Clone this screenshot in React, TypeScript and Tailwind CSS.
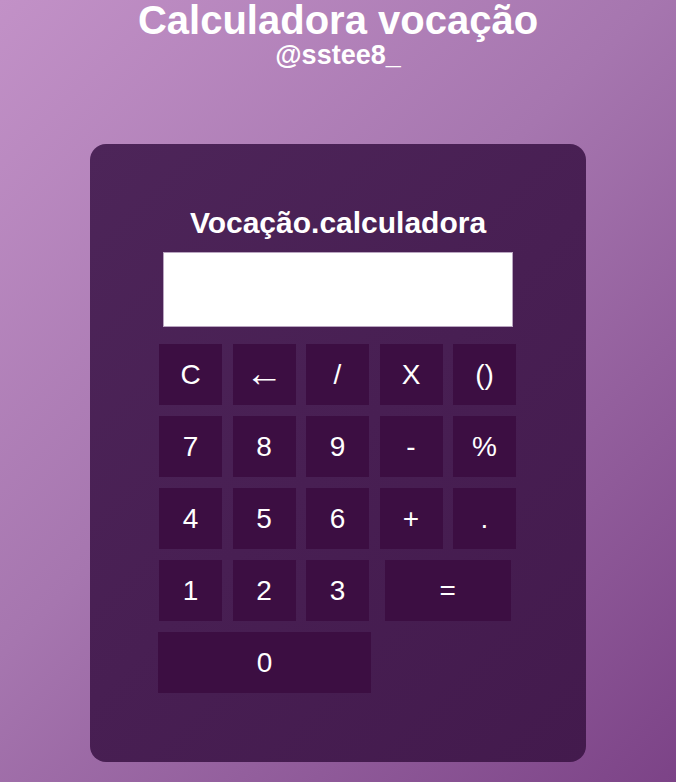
import React from "react";

const font = { fontFamily: '"Liberation Sans", Arial, sans-serif' };

function Key({ label, className = "" }: { label: string; className?: string }) {
  return (
    <button
      type="button"
      className={`h-[61px] bg-[#3c0e42] text-white text-[28px] leading-none flex items-center justify-center ${className}`}
    >
      {label}
    </button>
  );
}

export default function App() {
  const rows1 = ["C", "←", "/", "X", "()", "7", "8", "9", "-", "%", "4", "5", "6", "+", "."];
  return (
    <div
      className="min-h-[782px] w-full bg-[linear-gradient(135deg,#c291c7_0%,#a676af_45%,#7c4387_100%)] flex flex-col items-center"
      style={font}
    >
      <h1 className="text-white font-bold text-[40px] leading-none m-0">Calculadora vocação</h1>
      <h2 className="text-white font-bold text-[27px] leading-none mt-[2px]">@sstee8_</h2>
      <div className="mt-[75px] w-[496px] h-[618px] rounded-[16px] bg-[linear-gradient(135deg,#4d2559_0%,#481f53_50%,#431a4d_100%)] flex flex-col items-center pt-[64px]">
        <div className="text-white font-bold text-[30px] leading-none">Vocação.calculadora</div>
        <div className="mt-[14px] w-[350px] h-[75px] bg-white border border-[#b9a5c0]" />
        <div className="mt-[17px] grid grid-cols-[63px_63px_63px_63px_63px] gap-x-[10.5px] gap-y-[11px] ml-[-1px]">
          {rows1.map((k) => (
            <Key key={k} label={k} className={k === "←" ? "text-[38px] pb-[3px]" : ""} />
          ))}
          <Key label="1" />
          <Key label="2" />
          <Key label="3" />
          <Key label="=" className="col-span-2 mx-[5px]" />
          <Key label="0" className="col-span-3 ml-[-1px] mr-[-2px]" />
        </div>
      </div>
    </div>
  );
}
